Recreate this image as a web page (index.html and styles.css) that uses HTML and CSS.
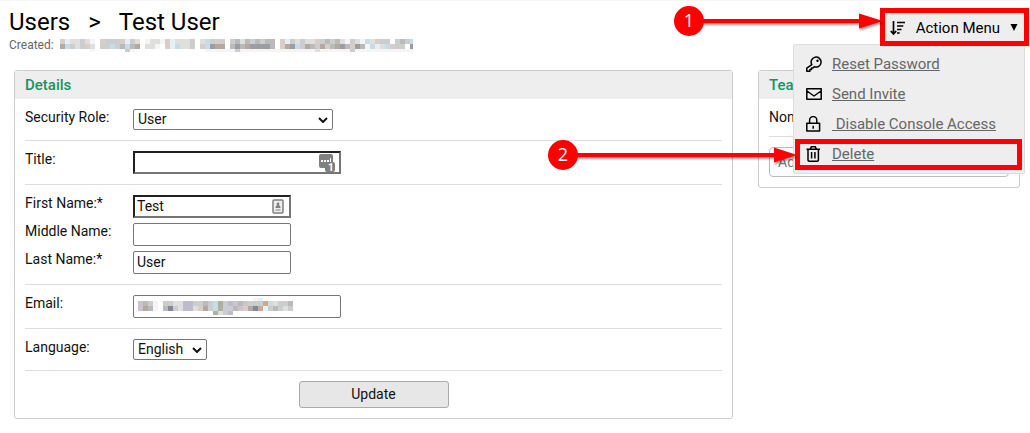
FILE: index.html
```html
<!DOCTYPE html>
<html lang="en">
<head>
<meta charset="utf-8">
<title>Users &gt; Test User</title>
<link rel="stylesheet" href="styles.css">
</head>
<body>
<header class="page-header">
  <div>
    <h1 class="crumbs"><span>Users</span><span class="sep">&gt;</span><span>Test User</span></h1>
    <div class="meta"><span>Created:</span>
      <svg class="redacted" id="redacted-dates" width="353" height="14" aria-hidden="true"></svg>
    </div>
  </div>
  <nav class="action">
    <button class="action-button" type="button">
      <svg width="16" height="16" viewBox="0 0 16 16" aria-hidden="true"><path d="M3.500 1v13M.8 11l2.700 3 2.700-3M7 2.500h8M7 6h6.300M7 9.500h4.500M7 13h2.700" fill="none" stroke="#000" stroke-width="1.700"/></svg>
      <span>Action Menu</span>
      <svg width="8" height="8" viewBox="0 0 8 8" aria-hidden="true"><path d="M.5 0h7L4 7z"/></svg>
    </button>
    <div class="menu">
      <a class="item" href="#"><svg width="16" height="16" viewBox="0 0 16 16"><path d="M5.800 8.600A5 5 0 1 1 8.200 10.700L7 12H5.500v1.500H3.900v1.700H.8v-3.100z" fill="none" stroke="#000" stroke-width="1.500" stroke-linejoin="round"/><circle cx="11.500" cy="4.700" r="1.200"/></svg><span>Reset Password</span></a>
      <a class="item" href="#"><svg width="16" height="16" viewBox="0 0 16 16"><path d="M.8 2.800h14.400v10.500H.8zM1 5l7 5 7-5" fill="none" stroke="#000" stroke-width="1.500" stroke-linejoin="round"/></svg><span>Send Invite</span></a>
      <a class="item" href="#"><svg width="16" height="16" viewBox="0 0 16 16"><path d="M.8 7.200h12.800v7.900H.8zM3.600 7V4.200a3.600 3.600 0 0 1 7.200 0V7M7.200 9.700v3" fill="none" stroke="#000" stroke-width="1.500" stroke-linejoin="round"/></svg><span>&nbsp;Disable Console Access</span></a>
      <a class="item" href="#"><svg width="16" height="16" viewBox="0 0 16 16"><path d="M.5 3.300h13.500M4.300 3l1-2.200h4l1 2.200M2 3.500V14q0 1.200 1.200 1.200h8q1.200 0 1.200-1.200V3.500M5.600 6v6.500M8.900 6v6.500" fill="none" stroke="#000" stroke-width="1.500"/></svg><span>Delete</span></a>
      <div class="mark mark-delete"></div>
      <svg class="arrow arrow-two" width="250" height="32" viewBox="0 0 250 32"><g class="shaft"><path d="M25 14h202v4H25z"/><path d="M226 8.500v15L249 16z"/></g><circle cx="15" cy="16" r="15"/><text x="15" y="22">2</text></svg>
    </div>
    <div class="mark mark-menu"></div>
    <svg class="arrow arrow-one" width="212" height="32" viewBox="0 0 212 32"><g class="shaft"><path d="M25 14h164v4H25z"/><path d="M185 8.500v15L209 16z"/></g><circle cx="15" cy="16" r="15"/><text x="15" y="22">1</text></svg>
  </nav>
</header>
<main class="columns">
  <form class="panel">
    <h2 class="panel-title">Details</h2>
    <div class="group"><div class="field"><label for="role">Security Role:</label><span class="pick pick-wide"><select id="role"><option>User</option></select><svg width="10" height="6" viewBox="0 0 10 6"><path d="M1 1l4 4 4-4"/></svg></span></div></div>
    <div class="group"><div class="field"><label for="title">Title:</label><span class="box box-wide"><input class="inset" id="title" type="text">
      <svg class="badge badge-title" width="17" height="19" viewBox="0 0 17 19"><rect width="14" height="14" rx="2" fill="#808080"/><rect x="6" y="8" width="10" height="10" rx="2" fill="#808080"/><path d="M2 6h2v2H2zM5 6h2v2H5zM8 6h2v2H8zM11 4h1v4h-1z" fill="#fff"/><text x="9" y="17" font-size="10">1</text></svg></span></div></div>
    <div class="group">
      <div class="field"><label for="first">First Name:*</label><span class="box"><input class="inset" id="first" type="text" value="Test">
        <svg class="badge badge-name" width="12" height="15" viewBox="0 0 12 15"><rect x="1" y="1" width="10" height="13" rx="1" fill="#eee" stroke="#808080" stroke-width="1.500"/><circle cx="6" cy="5" r="1.400" fill="#808080"/><path d="M3.500 9q0-3 2.500-3t2.500 3zM3.500 10.500h5v1h-5z" fill="#808080"/></svg></span></div>
      <div class="field"><label for="middle">Middle Name:</label><span class="box"><input id="middle" type="text"></span></div>
      <div class="field"><label for="last">Last Name:*</label><span class="box"><input id="last" type="text" value="User"></span></div>
    </div>
    <div class="group"><div class="field"><label for="email">Email:</label><span class="box box-wide"><input id="email" type="text"><svg class="badge badge-email" id="redacted-email" width="156" height="18" aria-hidden="true"></svg></span></div></div>
    <div class="group"><div class="field"><label for="language">Language:</label><span class="pick"><select id="language"><option>English</option></select><svg width="10" height="6" viewBox="0 0 10 6"><path d="M1 1l4 4 4-4"/></svg></span></div></div>
    <div class="group submit"><button class="update" type="submit">Update</button></div>
  </form>
  <section class="panel">
    <h2 class="panel-title">Teams</h2>
    <div class="group"><div>None</div></div>
    <div class="group"><input class="add-team" type="text" placeholder="Add Team" aria-label="Add team"></div>
  </section>
</main>
<script src="redact.js"></script>
</body>
</html>
```
FILE: redact.js
```js
// Draws the mosaic over private values: one letter per 5px cell.
const tones = { f: '#f6f4f4', a: '#dfdfde', b: '#cbcdce', c: '#b9bbbb', d: '#9b9da3', p: '#d8cdc9', n: '#b4a8a2', u: '#c9dbe5', w: '#e6eff6', v: '#bdbccd', g: '#aeb0a4', m: '#838896', o: '#c9aa94', k: '#cfc2cf' };
function mosaic(id, rows) {
  const svg = document.getElementById(id);
  for (const [y, height, cells] of rows) {
    [...cells].forEach((cell, i) => {
      if (!tones[cell]) return;
      const rect = document.createElementNS('http://www.w3.org/2000/svg', 'rect');
      for (const [name, value] of Object.entries({ x: i * 5, y, width: 5, height, fill: tones[cell] })) rect.setAttribute(name, value);
      svg.append(rect);
    });
  }
}
mosaic('redacted-dates', [
  [0, 5, 'pwaabaf.pbbbpwba.faafpwaaab.aubpb.bcacbcbcc.pwbabaapbcbcafbafuapbb.bcbu'],
  [5, 5, 'nubabpa.bbubcucn.aaf.pwuaab.pudnn.cdcnddddc.pndubncbnpcndcpdcfuwaupbb.ddc'],
  [10, 3, '......f......bf..............ffffffbfffffffffffffffaffffffbffffffffffff']
]);
mosaic('redacted-email', [
  [0, 3, '.......................fw'],
  [3, 5, 'kcbf.bbaavvbbcbugbvkckbbbouabbcb'.slice(0, 31)],
  [8, 5, 'kncf.cmbavvapnbugbbckpnmowbcbabb'.slice(0, 31)],
  [13, 4, '...............gabv']
]);
```
FILE: styles.css
```css
* { box-sizing: border-box; }
body { margin: 0; border-top: 1px solid #f5f5f5; background: #fff; color: #111; font: 14px/17px Roboto, sans-serif; }
h1, h2 { margin: 0; font-weight: 400; }
.page-header { display: flex; justify-content: space-between; align-items: flex-start; height: 69px; padding: 7px 6px 0 9px; }
.crumbs { display: flex; gap: 18px; font-size: 24px; line-height: 28px; color: #000; }
.meta { display: flex; gap: 6px; padding-top: 1px; font-size: 12px; line-height: 16px; color: #666; }
.redacted { margin-top: 2px; }
.action { position: relative; margin-top: 5px; }
.action-button { display: flex; align-items: center; gap: 10px; height: 28px; padding: 2px 6px 0 5px; border: 0; background: #eee; color: #000; font: 15px/20px Roboto, sans-serif; }
.menu { position: absolute; top: 31px; right: -1px; width: 232px; height: 130px; padding: 4px 12px; border: 1px solid #ddd; border-radius: 2px; background: #eee; }
.item { display: flex; align-items: center; gap: 10px; height: 30px; color: #666; font-size: 15px; white-space: nowrap; }
.mark { position: absolute; border: 5px solid #f00; }
.mark-menu { inset: -5px; }
.mark-delete { left: 1px; right: 2px; top: 94px; height: 31px; }
.arrow { position: absolute; overflow: visible; fill: #f00; }
.arrow text { fill: #fff; font: 18px "Open Sans", sans-serif; text-anchor: middle; }
.shaft { filter: drop-shadow(1px 2px 1px #0006); }
.arrow-one { right: 138px; top: -8px; }
.arrow-two { right: 226px; top: 94px; }
.columns { display: grid; grid-template-columns: 719fr 262fr; align-items: start; gap: 25px; padding: 0 10px 0 14px; }
.panel { border: 1px solid #ccc; border-radius: 3px; padding-bottom: 10px; }
.panel-title { height: 28px; padding: 0 10px; background: #eee; color: #159463; font-size: 15px; font-weight: 500; line-height: 28px; }
.group { display: grid; gap: 5px; margin: 0 10px; padding: 10px 0; border-bottom: 1px solid #ddd; }
.group:last-child { padding-bottom: 0; border-bottom: 0; }
.field { display: flex; align-items: flex-start; }
.field label { width: 108px; }
.box, .pick { position: relative; display: block; }
.box { width: 158px; }
.box-wide { width: 208px; }
.pick { width: 74px; }
.pick-wide { width: 200px; }
input, select { display: block; width: 100%; margin: 0; border: 1px solid #767676; border-radius: 2px; background: #fff; color: #111; font: 14px/17px Roboto, sans-serif; }
.box input { height: 23px; padding: 0 3px 1px; }
.box .inset { border: 2px inset #767676; border-radius: 0; padding: 0 2px 1px; }
select { appearance: none; height: 21px; padding: 0 4px; }
.pick svg { position: absolute; right: 5px; top: 8px; fill: none; stroke: #111; stroke-width: 2; pointer-events: none; }
.badge { position: absolute; }
.badge text { fill: #fff; font-family: Roboto, sans-serif; font-weight: 700; }
.badge-title { right: 5px; top: 3px; }
.badge-name { right: 7px; top: 4px; }
.badge-email { left: 5px; top: 3px; }
.submit { justify-items: center; }
.update { width: 150px; height: 27px; border: 1px solid #aaa; border-radius: 3px; background: #e7e7e7; color: #111; font: 14px/17px Roboto, sans-serif; }
.add-team { height: 30px; padding: 0 8px; border-color: #bbb; border-radius: 4px; }
.add-team::placeholder { color: #777; }
```
